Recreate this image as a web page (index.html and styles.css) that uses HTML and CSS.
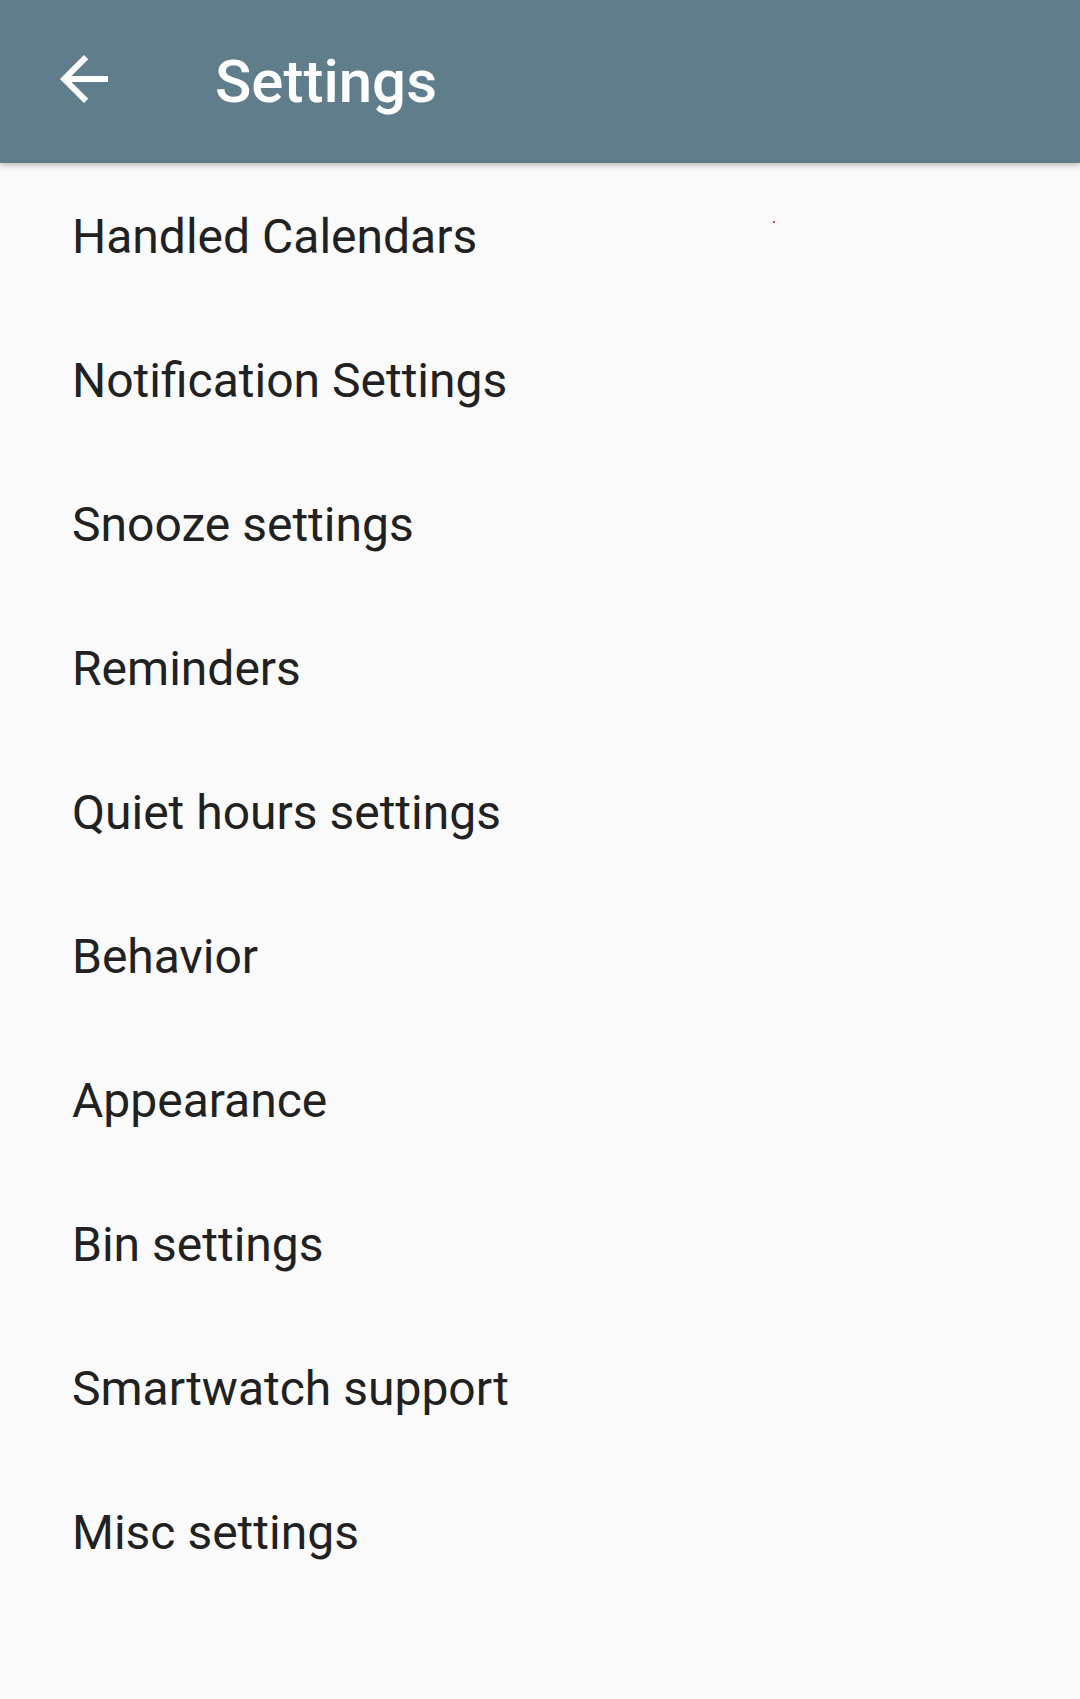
FILE: index.html
```html
<!DOCTYPE html>
<html>
<head>
<meta charset="utf-8">
<link rel="stylesheet" href="styles.css">
</head>
<body>
<header class="appbar">
  <svg class="back" viewBox="0 0 24 24" width="72" height="72"><path fill="#fff" d="M20 11H7.83l5.59-5.59L12 4l-8 8 8 8 1.41-1.41L7.83 13H20v-2z"/></svg>
  <h1 class="title">Settings</h1>
</header>
<main class="list">
  <div class="item">Handled Calendars</div>
  <div class="item">Notification Settings</div>
  <div class="item">Snooze settings</div>
  <div class="item">Reminders</div>
  <div class="item">Quiet hours settings</div>
  <div class="item">Behavior</div>
  <div class="item">Appearance</div>
  <div class="item">Bin settings</div>
  <div class="item">Smartwatch support</div>
  <div class="item">Misc settings</div>
</main>
<span class="dot"></span>
</body>
</html>
```

FILE: styles.css
```css
html, body {
  margin: 0;
  padding: 0;
}
body {
  width: 1080px;
  height: 1699px;
  background: #fafafa;
  font-family: Roboto, "Noto Sans", sans-serif;
  overflow: hidden;
  position: relative;
}
.appbar {
  height: 163px;
  background: #607d8b;
  display: flex;
  align-items: center;
  box-shadow: 0 2px 6px rgba(0,0,0,0.28);
  position: relative;
  z-index: 1;
}
.back {
  margin-left: 48px;
  margin-bottom: 5px;
  flex: none;
}
.title {
  margin: 0 0 0 95px;
  color: #fff;
  font-size: 60px;
  font-weight: 500;
  letter-spacing: 0;
}
.list {
  padding-top: 2px;
}
.item {
  height: 144px;
  line-height: 144px;
  padding-left: 72px;
  font-size: 48px;
  color: #212121;
}
.dot {
  position: absolute;
  left: 773px;
  top: 221px;
  width: 2px;
  height: 2px;
  background: #f0304a;
}
```
